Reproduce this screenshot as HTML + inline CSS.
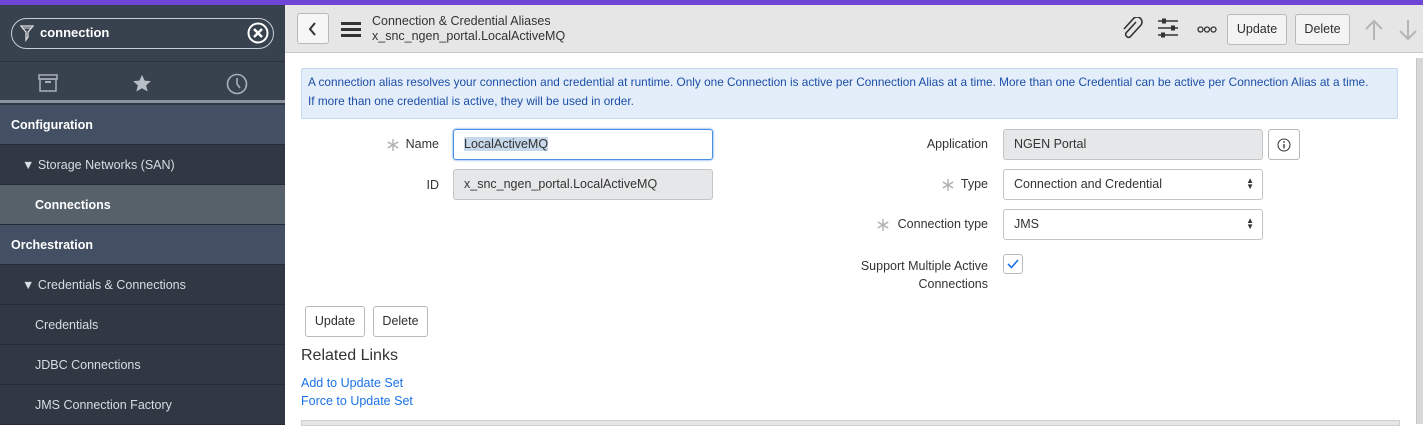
<!DOCTYPE html>
<html><head><meta charset="utf-8"><style>
*{box-sizing:border-box;margin:0;padding:0}
body{width:1423px;height:424px;overflow:hidden;font-family:"Liberation Sans",sans-serif;background:#fff;position:relative;font-size:13px;color:#2e2e2e}
.top{position:absolute;left:0;top:0;width:1423px;height:5px;background:#6f45d8}
.side{position:absolute;left:0;top:5px;width:285px;height:419px;background:#2f3843}
.search{position:absolute;left:0;top:0;width:285px;height:57px;background:#38424f;border-bottom:1px solid #2a323c}
.pill{position:absolute;left:11px;top:13px;width:263px;height:31px;border:1.5px solid #c9ced4;border-radius:16px}
.pill span{position:absolute;left:28px;top:6px;color:#fff;font-weight:bold;font-size:13px}
.tabs{position:absolute;left:0;top:57px;width:285px;height:41px;background:#38424f;border-bottom:3px solid #8b949c}
.it{position:absolute;left:0;width:285px;height:40px;border-bottom:1px solid #252c35;color:#d9dde1;font-size:12.5px;line-height:40px}
.hd{background:#435064;color:#fff;font-weight:bold;padding-left:11px}
.sb{padding-left:35px}
.sel{background:#56616a;color:#fff;font-weight:bold}
.main{position:absolute;left:285px;top:5px;width:1138px;height:419px}
.hdr{position:absolute;left:0;top:0;width:1138px;height:48px;background:#e6e6e7;border-bottom:1px solid #c8c8c8}
.btn{position:absolute;height:31px;border:1px solid #b9b9b9;border-radius:3px;background:#f3f3f3;font-size:12.5px;line-height:29px;text-align:center;color:#2e2e2e}
.info{position:absolute;left:16px;top:63px;width:1097px;height:51px;background:#e4eefa;border:1px solid #c4d9f1;border-radius:2px;color:#1c4ea5;font-size:11.8px;line-height:19px;padding:4px 6px;white-space:nowrap;overflow:hidden}
.lbl{position:absolute;text-align:right;font-size:12.5px;color:#333}
.inp{position:absolute;height:31px;border:1px solid #c4c4c4;border-radius:3px;font-size:12.5px;line-height:29px;padding-left:10px;color:#333}
.ro{background:#e6e7e8}
.ast{position:absolute;width:14px;height:14px}
.arr{position:absolute;right:8px;top:8px;font-size:8px;line-height:6px;color:#333}
a{color:#1b72e8;text-decoration:none;position:absolute;font-size:12.5px}
</style></head><body>
<svg width="0" height="0" style="position:absolute"><defs><g id="as"><path d="M7 1v12M1.8 4l10.4 6M1.8 10l10.4-6" stroke="#b0b0b0" stroke-width="1.4"/></g></defs></svg>
<div class="top"></div>
<div class="side">
 <div class="search"><div class="pill">
  <svg style="position:absolute;left:8px;top:6px" width="14" height="17" viewBox="0 0 14 17"><path d="M1 1h12L8 7v5l-2 3V7z" fill="none" stroke="#ddd" stroke-width="1.3"/><path d="M2 3h10" stroke="#ddd"/></svg>
  <span>connection</span>
  <svg style="position:absolute;right:4px;top:3px" width="22" height="22" viewBox="0 0 22 22"><circle cx="11" cy="11" r="9.5" fill="none" stroke="#fff" stroke-width="2"/><path d="M7 7l8 8M15 7l-8 8" stroke="#fff" stroke-width="2.5"/></svg>
 </div></div>
 <div class="tabs">
  <svg style="position:absolute;left:38px;top:12px" width="20" height="19" viewBox="0 0 20 19"><rect x="1" y="1" width="18" height="4" fill="none" stroke="#a9b0b8" stroke-width="1.5"/><rect x="2" y="5" width="16" height="12" fill="none" stroke="#a9b0b8" stroke-width="1.5"/><path d="M7 8h6" stroke="#a9b0b8" stroke-width="2"/></svg>
  <svg style="position:absolute;left:132px;top:12px" width="20" height="19" viewBox="0 0 24 23"><path d="M12 1l3.2 7 7.6.7-5.8 5 1.8 7.5L12 17.3 5.2 21.2 7 13.7l-5.8-5 7.6-.7z" fill="#b8bec5"/></svg>
  <svg style="position:absolute;left:226px;top:11px" width="22" height="22" viewBox="0 0 22 22"><circle cx="11" cy="11" r="9.5" fill="none" stroke="#a9b0b8" stroke-width="1.6"/><path d="M11 5v6l3 4" fill="none" stroke="#a9b0b8" stroke-width="1.6"/></svg>
 </div>
 <div class="it hd" style="top:100px">Configuration</div>
 <div class="it" style="top:140px;padding-left:22px">▼ Storage Networks (SAN)</div>
 <div class="it sb sel" style="top:180px">Connections</div>
 <div class="it hd" style="top:220px">Orchestration</div>
 <div class="it" style="top:260px;padding-left:22px">▼ Credentials &amp; Connections</div>
 <div class="it sb" style="top:300px">Credentials</div>
 <div class="it sb" style="top:340px">JDBC Connections</div>
 <div class="it sb" style="top:380px">JMS Connection Factory</div>
</div>
<div class="main">
 <div class="hdr">
  <div class="btn" style="left:12px;top:8px;width:32px;background:#f6f6f6"><svg width="10" height="14" viewBox="0 0 10 14" style="margin-top:8px"><path d="M7 1L2 7l5 6" fill="none" stroke="#333" stroke-width="2"/></svg></div>
  <div style="position:absolute;left:56px;top:17px;width:20px;height:3px;background:#333;box-shadow:0 6px 0 #333,0 12px 0 #333"></div>
  <div style="position:absolute;left:87px;top:9px;font-size:12.5px;line-height:15px;color:#333">Connection &amp; Credential Aliases<br>x_snc_ngen_portal.LocalActiveMQ</div>
  <svg style="position:absolute;left:836px;top:12px" width="22" height="24" viewBox="0 0 22 24"><path d="M15 5L5 16a3 3 0 0 0 4 4l11-12a5 5 0 0 0-7-7L3 12" fill="none" stroke="#333" stroke-width="1.6"/></svg>
  <svg style="position:absolute;left:873px;top:12px" width="20" height="22" viewBox="0 0 20 22"><path d="M0 4h20M0 11h20M0 18h20" stroke="#333" stroke-width="1.5"/><rect x="4" y="1.5" width="4" height="5" fill="#333"/><rect x="13" y="8.5" width="4" height="5" fill="#333"/><rect x="3" y="15.5" width="4" height="5" fill="#333"/></svg>
  <svg style="position:absolute;left:912px;top:21px" width="20" height="7" viewBox="0 0 20 7"><circle cx="3.5" cy="3.5" r="2.5" fill="none" stroke="#333" stroke-width="1.3"/><circle cx="10" cy="3.5" r="2.5" fill="none" stroke="#333" stroke-width="1.3"/><circle cx="16.5" cy="3.5" r="2.5" fill="none" stroke="#333" stroke-width="1.3"/></svg>
  <div class="btn" style="left:942px;top:9px;width:60px">Update</div>
  <div class="btn" style="left:1010px;top:9px;width:55px">Delete</div>
  <svg style="position:absolute;left:1079px;top:14px" width="20" height="22" viewBox="0 0 20 22"><path d="M10 21V2M2 10l8-8 8 8" fill="none" stroke="#b5b5b5" stroke-width="2"/></svg>
  <svg style="position:absolute;left:1113px;top:14px" width="20" height="22" viewBox="0 0 20 22"><path d="M10 1v19M2 12l8 8 8-8" fill="none" stroke="#b5b5b5" stroke-width="2"/></svg>
 </div>
 <div class="info">A connection alias resolves your connection and credential at runtime. Only one Connection is active per Connection Alias at a time. More than one Credential can be active per Connection Alias at a time.<br>If more than one credential is active, they will be used in order.</div>
 <div style="position:absolute;left:1131px;top:53px;width:7px;height:366px;background:#d8d8d8;border-left:1px solid #c6c6c6"></div>

 <svg class="ast" style="left:101px;top:133px" viewBox="0 0 14 14"><use href="#as"/></svg>
 <div class="lbl" style="left:100px;top:132px;width:54px">Name</div>
 <div class="inp" style="left:168px;top:124px;width:260px;border-color:#4a90e2;box-shadow:0 0 2px #4a90e2"><span style="background:#c7d8ea">LocalActiveMQ</span></div>
 <div class="lbl" style="left:100px;top:173px;width:54px">ID</div>
 <div class="inp ro" style="left:168px;top:164px;width:260px">x_snc_ngen_portal.LocalActiveMQ</div>

 <div class="lbl" style="left:560px;top:132px;width:143px">Application</div>
 <div class="inp ro" style="left:718px;top:124px;width:260px">NGEN Portal</div>
 <div class="btn" style="left:983px;top:124px;width:32px;background:#fff"><svg width="14" height="14" viewBox="0 0 14 14" style="margin-top:8px"><circle cx="7" cy="7" r="6" fill="none" stroke="#333"/><path d="M7 6v4.5" stroke="#333" stroke-width="1.3"/><circle cx="7" cy="4" r=".9" fill="#333"/></svg></div>
 <svg class="ast" style="left:656px;top:173px" viewBox="0 0 14 14"><use href="#as"/></svg>
 <div class="lbl" style="left:560px;top:172px;width:143px">Type</div>
 <div class="inp" style="left:718px;top:164px;width:260px">Connection and Credential<div class="arr">▲<br>▼</div></div>
 <svg class="ast" style="left:591px;top:213px" viewBox="0 0 14 14"><use href="#as"/></svg>
 <div class="lbl" style="left:560px;top:212px;width:143px">Connection type</div>
 <div class="inp" style="left:718px;top:204px;width:260px">JMS<div class="arr">▲<br>▼</div></div>
 <div class="lbl" style="left:540px;top:252px;width:163px;line-height:18px">Support Multiple Active Connections</div>
 <div style="position:absolute;left:718px;top:249px;width:20px;height:20px;border:1px solid #bbb;border-radius:3px"><svg width="18" height="18" viewBox="0 0 18 18"><path d="M4 9l3.5 3.5L14 5" fill="none" stroke="#1b72e8" stroke-width="1.6"/></svg></div>

 <div class="btn" style="left:20px;top:301px;width:60px;background:#fff">Update</div>
 <div class="btn" style="left:88px;top:301px;width:55px;background:#fff">Delete</div>
 <div style="position:absolute;left:16px;top:342px;font-size:16px;color:#333">Related Links</div>
 <a style="left:16px;top:371px">Add to Update Set</a>
 <a style="left:16px;top:389px">Force to Update Set</a>
 <div style="position:absolute;left:16px;top:415px;width:1099px;height:6px;background:#e6e6e6;border:1px solid #d0d0d0"></div>
</div>
</body></html>
